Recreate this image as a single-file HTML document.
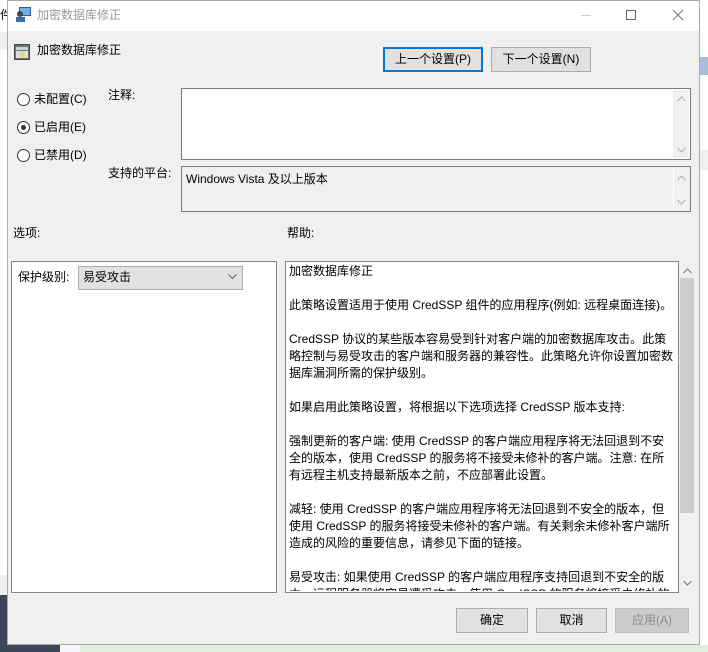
<!DOCTYPE html>
<html><head><meta charset="utf-8"><style>
*{margin:0;padding:0;box-sizing:border-box}
body{width:708px;height:652px;position:relative;overflow:hidden;background:#f0f0f0;font-family:"Liberation Sans","Noto Sans CJK SC",sans-serif;font-size:12px;color:#000}
.a{position:absolute}
.t{position:absolute;white-space:nowrap;line-height:14px}
.btn{position:absolute;background:#e1e1e1;border:1px solid #adadad;text-align:center;font-size:12px;line-height:23px}
.sb{position:absolute;background:#f0f0f0}
.radio{position:absolute;width:13px;height:13px;border:1px solid #333;border-radius:50%;background:#fff}
.help{position:absolute;left:286px;top:262px;width:392px;height:329px;overflow:hidden;background:#fff;padding:1px 3px;line-height:17px;font-size:12px}
.help p{margin:0}
</style></head><body>
<div class="a" style="left:0;top:0;width:7px;height:652px;background:#fff"></div>
<div class="a" style="left:0;top:32px;width:7px;height:18px;background:#f0f0f0"></div>
<div class="a" style="left:0;top:575px;width:7px;height:20px;background:#f0f0f0"></div>
<div class="a" style="left:0;top:595px;width:7px;height:57px;background:#3b4658"></div>
<div class="a" style="left:0;top:645px;width:60px;height:7px;background:#3b4658"></div>
<div class="a" style="left:60px;top:645px;width:20px;height:7px;background:#f5f5fa"></div>
<div class="a" style="left:80px;top:645px;width:628px;height:7px;background:#dff0d8"></div>
<div class="a" style="left:700px;top:0;width:8px;height:645px;background:#fff"></div>
<div class="a" style="left:700px;top:57px;width:8px;height:18px;background:#a9bcd8"></div>
<div class="a" style="left:700px;top:150px;width:8px;height:20px;background:#f0f0f0"></div>
<div class="t" style="left:0;top:8px;font-size:12px">件</div>
<div class="a" style="left:7px;top:0;width:693px;height:645px;background:#f0f0f0;border:1px solid #aaa"></div>
<div class="a" style="left:8px;top:1px;width:691px;height:30px;background:#fff"></div>
<svg class="a" style="left:15px;top:6px" width="17" height="17"><rect x="4" y="1" width="12" height="9" fill="#2d5d9a"/><rect x="5" y="2" width="10" height="7" fill="#6fb3e8"/><circle cx="5" cy="8" r="3" fill="#444"/><rect x="1" y="11" width="9" height="5" fill="#3a6ea5"/></svg>
<div class="t" style="left:37px;top:8px;color:#999">加密数据库修正</div>
<div class="a" style="left:581px;top:15px;width:10px;height:1px;background:#ccc"></div>
<div class="a" style="left:626px;top:10px;width:10px;height:10px;border:1px solid #666"></div>
<svg class="a" style="left:672px;top:9px" width="12" height="12"><path d="M1 1L11 11M11 1L1 11" stroke="#777" stroke-width="1"/></svg>
<svg class="a" style="left:14px;top:44px" width="17" height="17"><rect x="0.5" y="0.5" width="15" height="15" fill="#6a7a6a" stroke="#445"/><rect x="2" y="3" width="12" height="3" fill="#c9d3e8"/><rect x="2" y="7" width="12" height="7" fill="#dde"/><circle cx="8" cy="11" r="3" fill="#e8d870"/></svg>
<div class="t" style="left:37px;top:43px">加密数据库修正</div>
<div class="btn" style="left:383px;top:47px;width:100px;height:25px;border:2px solid #0078d7;line-height:21px">上一个设置(P)</div>
<div class="btn" style="left:491px;top:47px;width:100px;height:25px">下一个设置(N)</div>
<div class="radio" style="left:17px;top:93px"></div><div class="t" style="left:34px;top:92px">未配置(C)</div>
<div class="radio" style="left:17px;top:121px"></div><div class="a" style="left:21px;top:125px;width:5px;height:5px;border-radius:50%;background:#333"></div><div class="t" style="left:34px;top:120px">已启用(E)</div>
<div class="radio" style="left:17px;top:149px"></div><div class="t" style="left:34px;top:148px">已禁用(D)</div>
<div class="t" style="left:108px;top:88px">注释:</div>
<div class="a" style="left:181px;top:88px;width:510px;height:72px;background:#fff;border:1px solid #7a7a7a"></div>
<div class="sb" style="left:673px;top:90px;width:16px;height:68px"></div>
<svg class="a" style="left:677px;top:96px" width="9" height="6"><path d="M0.5 5L4.5 1L8.5 5" stroke="#b0b0b0" fill="none"/></svg>
<svg class="a" style="left:677px;top:147px" width="9" height="6"><path d="M0.5 1L4.5 5L8.5 1" stroke="#b0b0b0" fill="none"/></svg>
<div class="t" style="left:108px;top:166px">支持的平台:</div>
<div class="a" style="left:181px;top:166px;width:510px;height:46px;background:#f0f0f0;border:1px solid #7a7a7a"></div>
<div class="sb" style="left:673px;top:168px;width:16px;height:42px;border-left:1px solid #fff"></div>
<svg class="a" style="left:677px;top:175px" width="9" height="6"><path d="M0.5 5L4.5 1L8.5 5" stroke="#b0b0b0" fill="none"/></svg>
<svg class="a" style="left:677px;top:199px" width="9" height="6"><path d="M0.5 1L4.5 5L8.5 1" stroke="#b0b0b0" fill="none"/></svg>
<div class="t" style="left:186px;top:172px">Windows Vista 及以上版本</div>
<div class="t" style="left:13px;top:226px">选项:</div>
<div class="t" style="left:287px;top:226px">帮助:</div>
<div class="a" style="left:11px;top:261px;width:266px;height:332px;background:#fff;border:1px solid #828790"></div>
<div class="t" style="left:18px;top:270px">保护级别:</div>
<div class="a" style="left:78px;top:266px;width:165px;height:24px;background:#e1e1e1;border:1px solid #adadad"></div>
<div class="t" style="left:83px;top:270px">易受攻击</div>
<svg class="a" style="left:228px;top:274px" width="9" height="6"><path d="M0.5 0.5L4.5 4.5L8.5 0.5" stroke="#666" fill="none"/></svg>
<div class="a" style="left:285px;top:261px;width:394px;height:332px;border:1px solid #828790;background:#fff"></div>
<div class="help">
<p>加密数据库修正</p><p>&nbsp;</p>
<p>此策略设置适用于使用 CredSSP 组件的应用程序(例如: 远程桌面连接)。</p><p>&nbsp;</p>
<p>CredSSP 协议的某些版本容易受到针对客户端的加密数据库攻击。此策<br>略控制与易受攻击的客户端和服务器的兼容性。此策略允许你设置加密数<br>据库漏洞所需的保护级别。</p><p>&nbsp;</p>
<p>如果启用此策略设置，将根据以下选项选择 CredSSP 版本支持:</p><p>&nbsp;</p>
<p>强制更新的客户端: 使用 CredSSP 的客户端应用程序将无法回退到不安<br>全的版本，使用 CredSSP 的服务将不接受未修补的客户端。注意: 在所<br>有远程主机支持最新版本之前，不应部署此设置。</p><p>&nbsp;</p>
<p>减轻: 使用 CredSSP 的客户端应用程序将无法回退到不安全的版本，但<br>使用 CredSSP 的服务将接受未修补的客户端。有关剩余未修补客户端所<br>造成的风险的重要信息，请参见下面的链接。</p><p>&nbsp;</p>
<p>易受攻击: 如果使用 CredSSP 的客户端应用程序支持回退到不安全的版<br>本，远程服务器将容易遭受攻击。使用 CredSSP 的服务将接受未修补的</p>
</div>
<div class="sb" style="left:679px;top:261px;width:16px;height:332px"></div>
<svg class="a" style="left:683px;top:268px" width="9" height="6"><path d="M0.5 5L4.5 1L8.5 5" stroke="#777" fill="none"/></svg>
<div class="a" style="left:680px;top:278px;width:14px;height:235px;background:#cdcdcd"></div>
<svg class="a" style="left:683px;top:580px" width="9" height="6"><path d="M0.5 1L4.5 5L8.5 1" stroke="#777" fill="none"/></svg>
<div class="btn" style="left:456px;top:608px;width:72px;height:25px">确定</div>
<div class="btn" style="left:536px;top:608px;width:71px;height:25px">取消</div>
<div class="btn" style="left:615px;top:608px;width:74px;height:25px;background:#ccc;border-color:#bfbfbf;color:#8a8a8a">应用(A)</div>
</body></html>
